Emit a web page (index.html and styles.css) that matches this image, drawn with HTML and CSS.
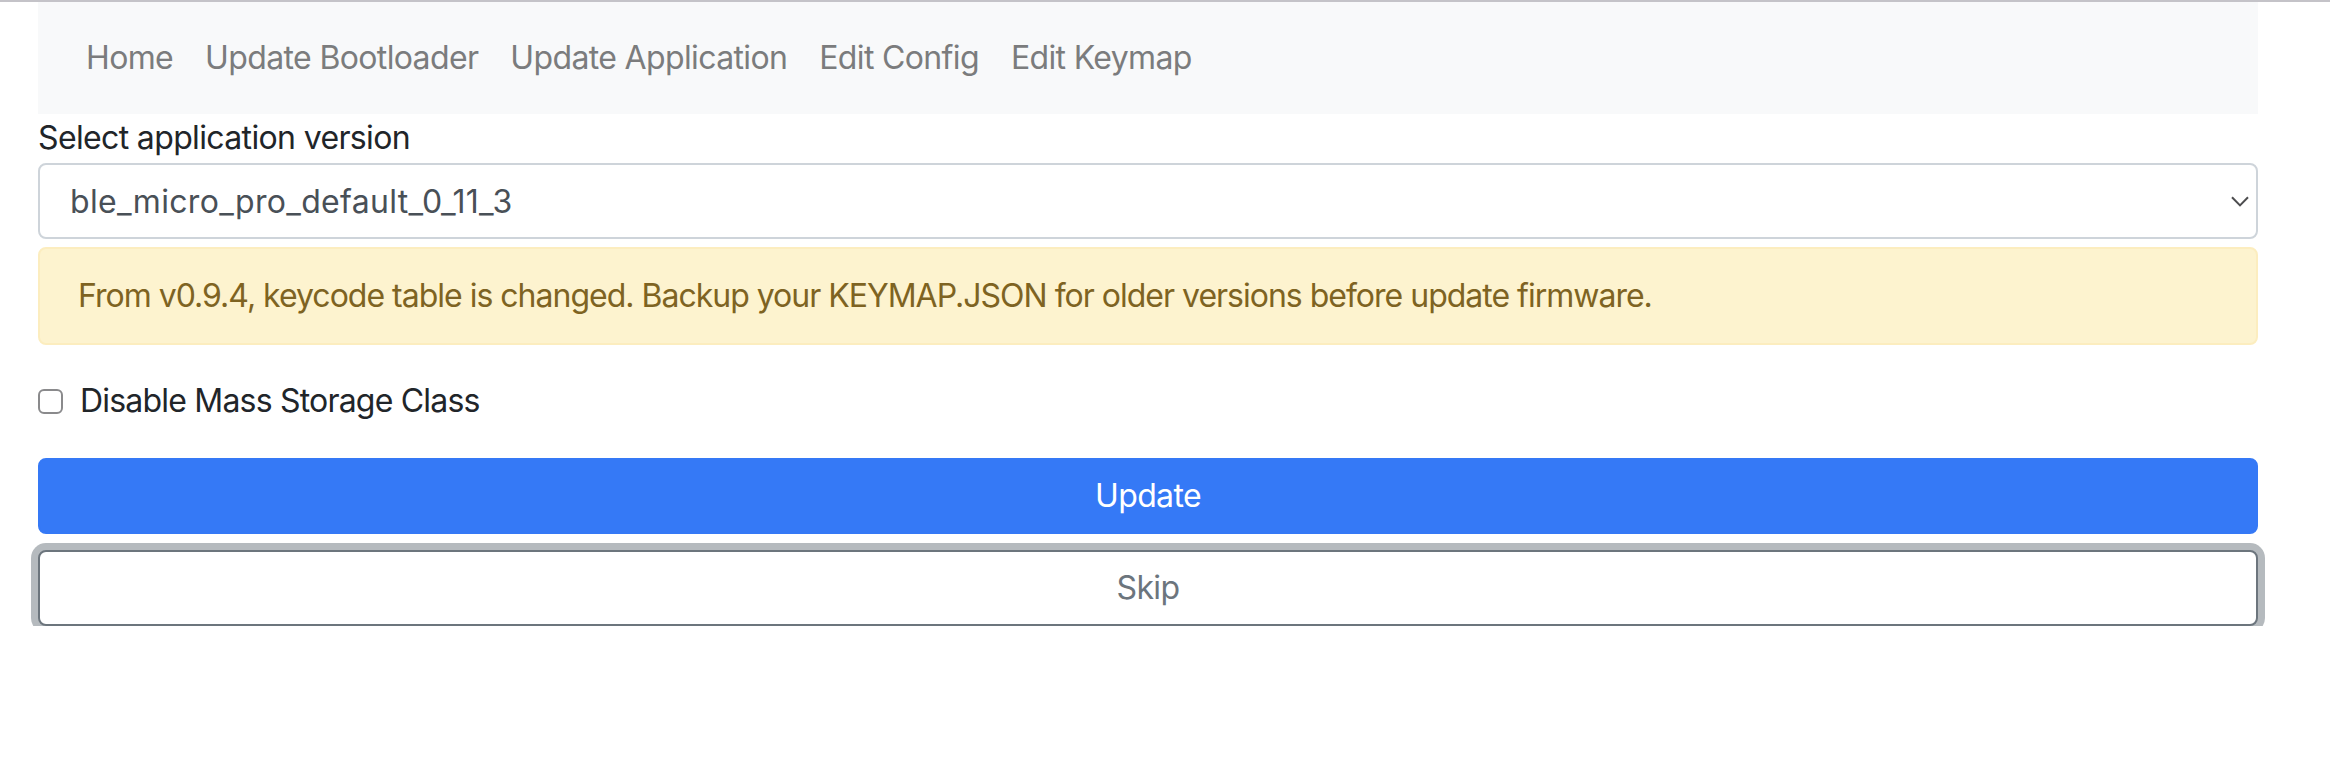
FILE: index.html
```html
<!DOCTYPE html>
<html lang="en">
<head>
<meta charset="utf-8">
<title>BLE Micro Pro Web Configurator</title>
<link rel="stylesheet" href="styles.css">
</head>
<body>
<div class="topline"></div>
<div class="container">
  <nav class="navbar">
    <a class="nav-link" href="#">Home</a>
    <a class="nav-link" href="#">Update Bootloader</a>
    <a class="nav-link" href="#">Update Application</a>
    <a class="nav-link" href="#">Edit Config</a>
    <a class="nav-link" href="#">Edit Keymap</a>
  </nav>
  <form class="form">
    <label class="form-label">Select application version</label>
    <div class="select">
      <span class="select-value">ble_micro_pro_default_0_11_3</span>
      <svg class="select-arrow" width="18" height="11" viewBox="0 0 18 11"><path d="M1 1.2 L9 9.4 L17 1.2" fill="none" stroke="#4d4d4f" stroke-width="2"/></svg>
    </div>
    <div class="alert">From v0.9.4, keycode table is changed. Backup your KEYMAP.JSON for older versions before update firmware.</div>
    <label class="form-check"><input type="checkbox" class="check"><span class="check-label">Disable Mass Storage Class</span></label>
    <button type="button" class="btn btn-primary">Update</button>
    <button type="button" class="btn btn-outline">Skip</button>
  </form>
</div>
</body>
</html>
```
FILE: styles.css
```css
* { box-sizing: border-box; }
html, body {
  margin: 0;
  padding: 0;
  background: #ffffff;
}
body {
  font-family: Inter, "Liberation Sans", sans-serif;
  font-size: 32px;
  letter-spacing: -0.02em;
  color: #212529;
}
.topline {
  height: 2px;
  background: #c4c3c8;
}
.container {
  margin: 0 72px 0 38px;
}
.navbar {
  display: flex;
  background: #f8f9fa;
  padding: 16px 32px;
}
.nav-link {
  display: block;
  padding: 16px;
  line-height: 48px;
  color: #7b7c7d;
  text-decoration: none;
}
.form {
  display: flex;
  flex-direction: column;
}
.form-label {
  display: block;
  line-height: 48px;
  margin-bottom: 1px;
  color: #212529;
}
.select {
  display: flex;
  align-items: center;
  justify-content: space-between;
  height: 76px;
  border: 2px solid #ced4da;
  border-radius: 8px;
  padding: 0 7px 0 30px;
  color: #495057;
  background: #fff;
  letter-spacing: 0.3px;
}
.select-arrow {
  display: block;
  flex: none;
}
.alert {
  margin-top: 8px;
  margin-bottom: 32px;
  padding: 23px 38px;
  line-height: 48px;
  background: #fdf3cf;
  border: 2px solid #fcedbf;
  border-radius: 8px;
  color: #7e6322;
  letter-spacing: -1px;
}
.form-check {
  display: flex;
  align-items: center;
  line-height: 48px;
  margin-bottom: 33px;
  color: #212529;
  letter-spacing: -0.025em;
}
.check {
  appearance: none;
  -webkit-appearance: none;
  width: 25px;
  height: 25px;
  margin: 0 17px 0 0;
  border: 2px solid #8a8a8c;
  border-radius: 6px;
  background: #fff;
  flex: none;
}
.btn {
  display: block;
  width: 100%;
  height: 76px;
  border-radius: 8px;
  font-family: inherit;
  font-size: 32px;
  letter-spacing: -0.02em;
  line-height: 48px;
  padding: 12px 24px;
  text-align: center;
}
.btn-primary {
  background: #3579f6;
  border: 2px solid #3579f6;
  color: #ffffff;
}
.btn-outline {
  margin-top: 16px;
  background: #ffffff;
  border: 2px solid #6c757d;
  color: #6c757d;
  box-shadow: 0 0 0 7px rgba(108, 117, 125, 0.5);
}
```
